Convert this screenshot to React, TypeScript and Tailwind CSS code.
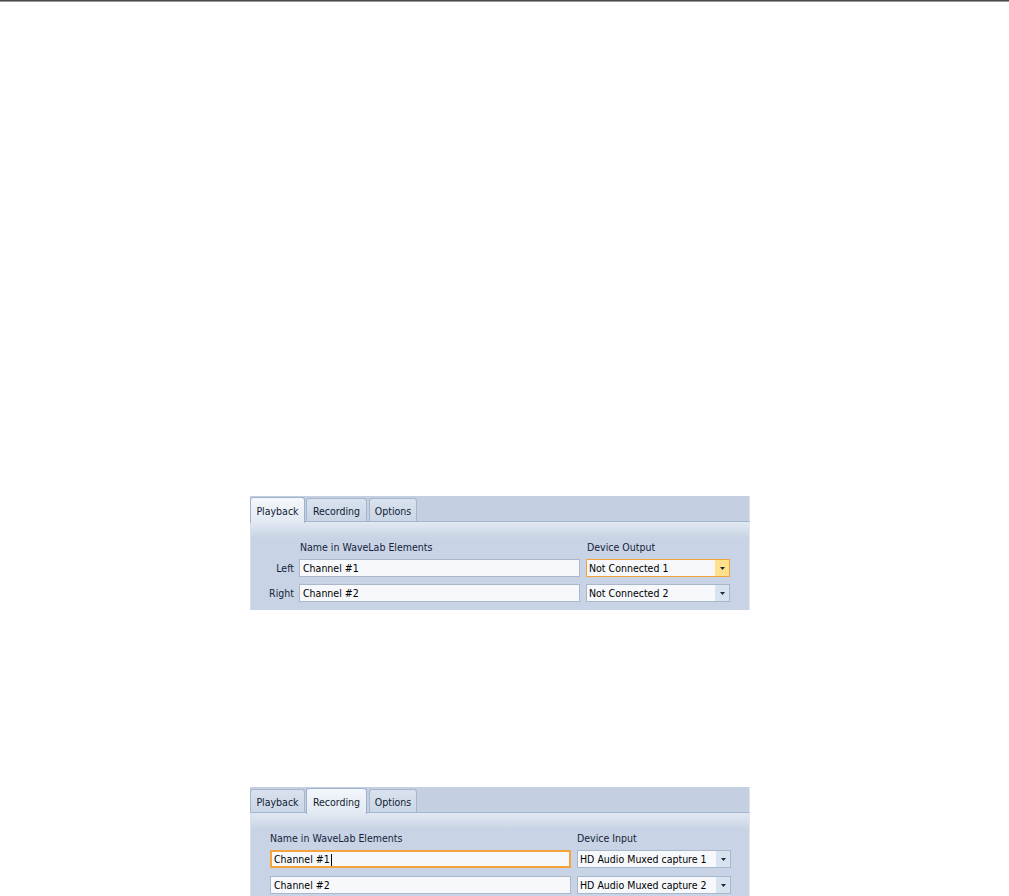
import React from "react";

const Arrow = () => (
  <svg width="5" height="3" viewBox="0 0 5 3" className="block">
    <path d="M0 0h5L2.5 3z" fill="#1e2a3c" />
  </svg>
);

function Tab({ label, active, w, ml }: { label: string; active: boolean; w: string; ml: string }) {
  return active ? (
    <div
      className={`${w} ${ml} relative z-10 -mb-[2px] h-[26px] rounded-t-[3px] border border-b-0 border-[#9fb2cc] bg-gradient-to-b from-[#f4f7fb] to-[#e2e9f2] flex items-start justify-center pt-[6px] text-[10.5px] text-[#0f1b33]`}
    >
      {label}
    </div>
  ) : (
    <div
      className={`${w} ${ml} h-[23px] rounded-t-[3px] border border-b-0 border-[#a5b6cd] bg-gradient-to-b from-[#d9e2ee] to-[#cbd6e6] flex items-start justify-center pt-[5px] text-[10.5px] text-[#0f1b33]`}
    >
      {label}
    </div>
  );
}

function Select({ value, hot, w }: { value: string; hot?: boolean; w: string }) {
  return (
    <div
      className={`${w} h-[18px] flex border ${hot ? "border-[#f2a33c]" : "border-[#a9b7ca]"} bg-[#f6f8fb]`}
    >
      <div className="flex-1 pl-[2px] text-[10.5px] leading-[17px] text-black whitespace-nowrap overflow-hidden">
        {value}
      </div>
      <div
        className={`w-[14px] flex items-center justify-center ${hot ? "bg-[#ffe08c]" : "bg-[#d8e3f0]"}`}
      >
        <Arrow />
      </div>
    </div>
  );
}

function Input({ value, focus, w, caret }: { value: string; focus?: boolean; w: string; caret?: boolean }) {
  return (
    <div
      className={`${w} h-[18px] flex items-center bg-[#f6f8fb] pt-px ${
        focus ? "border-2 border-[#f5a33a] pl-[2px]" : "border border-[#abb8ca] pl-[3px]"
      } text-[10.5px] text-black whitespace-nowrap`}
    >
      {value}
      {caret && <span className="inline-block w-px h-[12px] bg-black ml-px" />}
    </div>
  );
}

function TabStrip({ active }: { active: number }) {
  return (
    <div className="h-[25px] flex items-end bg-[#c4d0e2] border-r border-[#dce4ef]">
      <Tab label="Playback" active={active === 0} w="w-[55px]" ml="ml-0" />
      <Tab label="Recording" active={active === 1} w="w-[61px]" ml="ml-[1px]" />
      <Tab label="Options" active={active === 2} w="w-[48px]" ml="ml-[2px]" />
    </div>
  );
}

export default function App() {
  return (
    <div className="h-[896px] w-[1009px] overflow-hidden bg-white font-['DejaVu_Sans_Condensed',Tahoma,sans-serif]">
      <div className="h-px bg-[#4a4a4a]" />
      <div className="h-px bg-[#9a9a9a]" />

      {/* Panel 1 */}
      <div className="mt-[494px] ml-[250px] w-[500px]">
        <TabStrip active={0} />
        <div className="h-[89px] border-t border-l border-r border-t-[#a3b5cf] border-l-[#d8e0eb] border-r-[#dfe6f0] bg-[#c8d4e5] relative">
          <div className="absolute inset-x-0 top-0 h-[16px] bg-gradient-to-b from-[#e2e9f2] to-[#c8d4e5]" />
          <div className="relative pt-[19px]">
            <div className="flex h-[14px] items-center text-[10.5px] text-[#16223a]">
              <div className="ml-[49px] w-[287px]">Name in WaveLab Elements</div>
              <div>Device Output</div>
            </div>
            <div className="mt-[4px] flex items-center">
              <div className="w-[43px] pt-px text-right text-[10.5px] text-[#16223a]">Left</div>
              <div className="ml-[5px]">
                <Input value="Channel #1" w="w-[281px]" />
              </div>
              <div className="ml-[6px]">
                <Select value="Not Connected 1" hot w="w-[144px]" />
              </div>
            </div>
            <div className="mt-[7px] flex items-center">
              <div className="w-[43px] pt-px text-right text-[10.5px] text-[#16223a]">Right</div>
              <div className="ml-[5px]">
                <Input value="Channel #2" w="w-[281px]" />
              </div>
              <div className="ml-[6px]">
                <Select value="Not Connected 2" w="w-[144px]" />
              </div>
            </div>
          </div>
        </div>
      </div>

      {/* Panel 2 */}
      <div className="mt-[177px] ml-[250px] w-[500px]">
        <TabStrip active={1} />
        <div className="h-[100px] border-t border-l border-r border-t-[#a3b5cf] border-l-[#d8e0eb] border-r-[#dfe6f0] bg-[#c8d4e5] relative">
          <div className="absolute inset-x-0 top-0 h-[16px] bg-gradient-to-b from-[#e2e9f2] to-[#c8d4e5]" />
          <div className="relative pt-[19px]">
            <div className="flex h-[14px] items-center text-[10.5px] text-[#16223a]">
              <div className="ml-[19px] w-[307px]">Name in WaveLab Elements</div>
              <div>Device Input</div>
            </div>
            <div className="mt-[4px] flex items-center">
              <div className="ml-[19px]">
                <Input value="Channel #1" focus caret w="w-[301px]" />
              </div>
              <div className="ml-[6px]">
                <Select value="HD Audio Muxed capture 1" w="w-[154px]" />
              </div>
            </div>
            <div className="mt-[8px] flex items-center">
              <div className="ml-[19px]">
                <Input value="Channel #2" w="w-[301px]" />
              </div>
              <div className="ml-[6px]">
                <Select value="HD Audio Muxed capture 2" w="w-[154px]" />
              </div>
            </div>
          </div>
        </div>
      </div>
    </div>
  );
}
